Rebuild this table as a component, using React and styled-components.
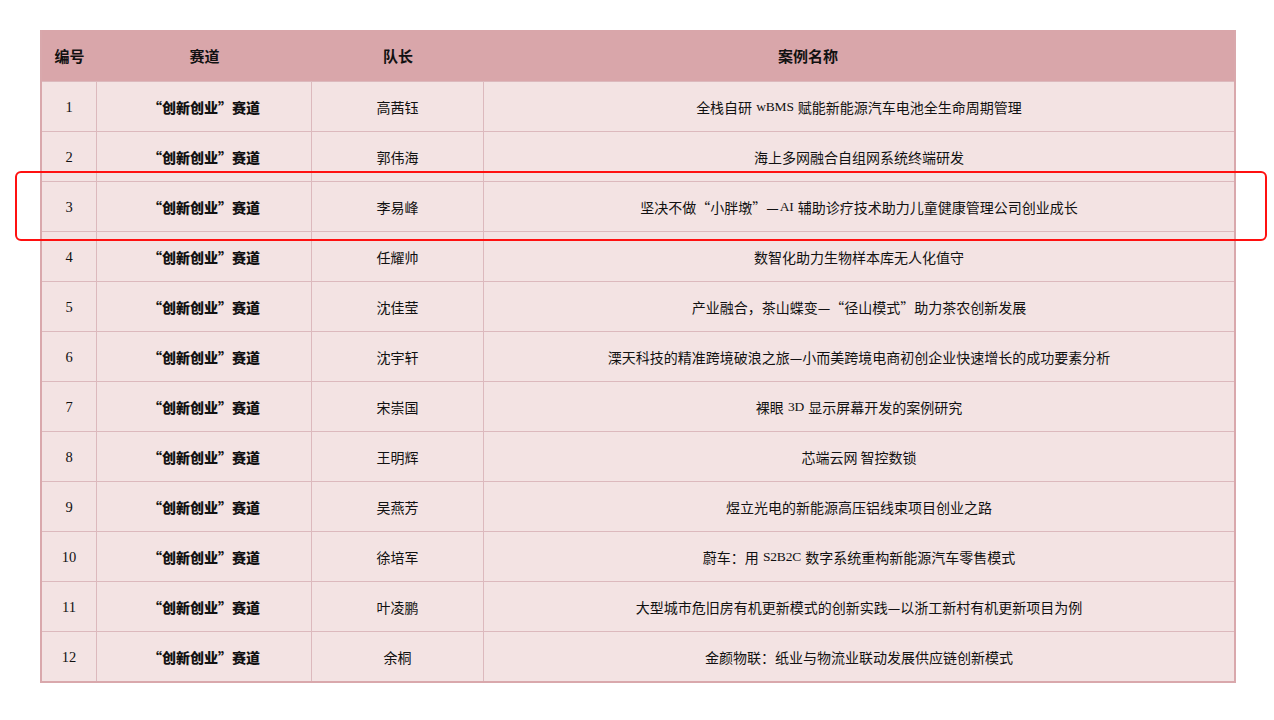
import React from 'react';
import styled, { createGlobalStyle } from 'styled-components';

const GlobalStyle = createGlobalStyle`
  html, body {
    margin: 0;
    padding: 0;
    background: #ffffff;
  }
  * {
    box-sizing: border-box;
  }
`;

const Page = styled.div`
  width: 1274px;
  height: 720px;
  padding: 30px 0 0 40px;
  position: relative;
  background: #ffffff;
`;

const Table = styled.div`
  width: 1196px;
  display: grid;
  grid-template-columns: 55px 215px 172px 1fr;
  border: 2px solid #d9a8ac;
  border-top: none;
  background: #f3e3e3;
`;

const HeadCell = styled.div`
  height: 51px;
  display: flex;
  align-items: center;
  justify-content: center;
  padding-right: ${p => p.$shift || 0}px;
  background: #d9a6aa;
  color: #111;
  font-family: "Noto Sans CJK SC", sans-serif;
  font-weight: 700;
  font-size: 15px;
`;

const Cell = styled.div`
  height: 50px;
  display: flex;
  align-items: center;
  justify-content: center;
  border-top: 1px solid #dcb9bd;
  border-right: ${p => (p.$last ? 'none' : '1px solid #dcb9bd')};
  color: #111;
  font-size: 14px;
  white-space: pre;
  font-family: "Noto Sans CJK SC", sans-serif;
  font-weight: ${p => (p.$bold ? 900 : 400)};
`;

const Num = styled.span`
  font-family: "Liberation Serif", serif;
  font-size: 14.5px;
  position: relative;
  top: 1px;
`;

const Latin = styled.span`
  font-family: "Liberation Serif", serif;
  font-size: 13.5px;
  letter-spacing: -0.2px;
  margin: 0 1px;
  vertical-align: -1px;
`;

const Highlight = styled.div`
  position: absolute;
  left: 15px;
  top: 171px;
  width: 1252px;
  height: 70px;
  border: 2px solid #ff1010;
  border-radius: 6px;
  pointer-events: none;
`;

const rows = [
  ['高茜钰', '全栈自研 wBMS 赋能新能源汽车电池全生命周期管理'],
  ['郭伟海', '海上多网融合自组网系统终端研发'],
  ['李易峰', '坚决不做“小胖墩”—AI 辅助诊疗技术助力儿童健康管理公司创业成长'],
  ['任耀帅', '数智化助力生物样本库无人化值守'],
  ['沈佳莹', '产业融合，茶山蝶变—“径山模式”助力茶农创新发展'],
  ['沈宇轩', '溧天科技的精准跨境破浪之旅—小而美跨境电商初创企业快速增长的成功要素分析'],
  ['宋崇国', '裸眼 3D 显示屏幕开发的案例研究'],
  ['王明辉', '芯端云网 智控数锁'],
  ['吴燕芳', '煜立光电的新能源高压铝线束项目创业之路'],
  ['徐培军', '蔚车：用 S2B2C 数字系统重构新能源汽车零售模式'],
  ['叶凌鹏', '大型城市危旧房有机更新模式的创新实践—以浙工新村有机更新项目为例'],
  ['余桐', '金颜物联：纸业与物流业联动发展供应链创新模式'],
];

// wrap ascii runs so they get the narrow serif face, as in the slide
const renderTitle = (text) =>
  text.split(/([A-Za-z0-9]+)/).map((part, i) =>
    /^[A-Za-z0-9]+$/.test(part) ? <Latin key={i}>{part}</Latin> : part
  );

export default function App() {
  return (
    <Page>
      <GlobalStyle />
      <Table>
        <HeadCell>编号</HeadCell>
        <HeadCell>赛道</HeadCell>
        <HeadCell>队长</HeadCell>
        <HeadCell $shift={102}>案例名称</HeadCell>
        {rows.map(([leader, title], i) => (
          <React.Fragment key={i}>
            <Cell><Num>{i + 1}</Num></Cell>
            <Cell $bold>“创新创业”赛道</Cell>
            <Cell>{leader}</Cell>
            <Cell $last>{renderTitle(title)}</Cell>
          </React.Fragment>
        ))}
      </Table>
      <Highlight />
    </Page>
  );
}
